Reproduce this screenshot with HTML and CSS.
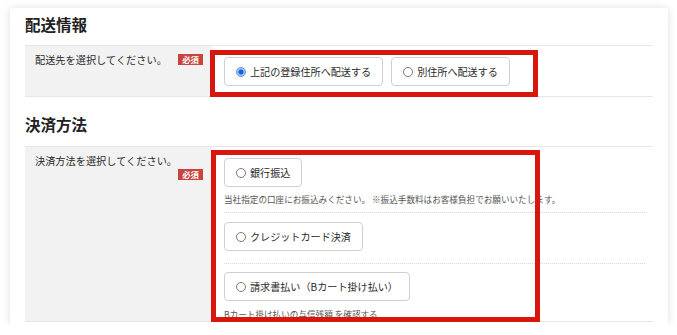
FILE: index.html
```html
<!DOCTYPE html>
<html lang="ja">
<head>
    <meta charset="UTF-8">
    <meta name="viewport" content="width=device-width, initial-scale=1.0">
    <title>配送情報・決済方法</title>
    <link rel="stylesheet" href="styles.css">
</head>
<body>
    <div class="card">
        <h2 class="section-title">配送情報</h2>
        <div class="form-row">
            <div class="form-label">
                <span class="label-text">配送先を選択してください。</span>
                <span class="required">必須</span>
            </div>
            <div class="form-field shipping">
                <div class="choice-list">
                    <label class="choice checked"><span class="radio"></span>上記の登録住所へ配送する</label>
                    <label class="choice"><span class="radio"></span>別住所へ配送する</label>
                </div>
                <div class="highlight highlight-shipping"></div>
            </div>
        </div>

        <h2 class="section-title second">決済方法</h2>
        <div class="form-row">
            <div class="form-label">
                <span class="label-text">決済方法を選択してください。</span>
                <span class="required">必須</span>
            </div>
            <div class="form-field payment">
                <div class="pay-item first">
                    <label class="choice"><span class="radio"></span>銀行振込</label>
                    <p class="note">当社指定の口座にお振込みください。 ※振込手数料はお客様負担でお願いいたします。</p>
                </div>
                <div class="pay-item">
                    <label class="choice"><span class="radio"></span>クレジットカード決済</label>
                </div>
                <div class="pay-item last">
                    <label class="choice"><span class="radio"></span>請求書払い（Bカート掛け払い）</label>
                    <p class="note">Bカート掛け払いの与信残額 を確認する</p>
                </div>
                <div class="highlight highlight-payment"></div>
            </div>
        </div>
    </div>
</body>
</html>
```

FILE: styles.css
```css
body {
    margin: 0;
    padding: 8px 9px 0 10px;
    background-color: #fff;
    font-family: "Noto Sans CJK JP", "Noto Sans", sans-serif;
    color: #2a2a2a;
}
.card {
    background-color: #fff;
    box-shadow: 0 0 8px rgba(0, 0, 0, 0.13);
    padding: 5px 15px 4px 15px;
    height: 317px;
    box-sizing: border-box;
    overflow: hidden;
}
.section-title {
    margin: 0 0 10px 0;
    font-size: 15.5px;
    line-height: 22px;
    font-weight: bold;
    color: #222;
}
.section-title.second {
    margin-top: 16px;
    margin-bottom: 11px;
}
.form-row {
    display: grid;
    grid-template-columns: 187px 1fr;
    border-top: 1px solid #e6e6e6;
    border-bottom: 1px solid #e6e6e6;
}
.form-label {
    background-color: #f2f2f2;
    padding: 7px 9px 0 10px;
    display: flex;
    flex-wrap: wrap;
    align-items: flex-start;
    align-content: flex-start;
    column-gap: 4px;
    font-size: 10.2px;
    line-height: 14px;
}
.required {
    margin-left: auto;
    margin-top: 1px;
    background-color: #c9443e;
    color: #fff;
    font-size: 8.4px;
    font-weight: bold;
    line-height: 11px;
    height: 11px;
    padding: 0 4px;
}
.form-field {
    position: relative;
    padding: 11px 8px 10px 12px;
}
.choice-list {
    display: flex;
    gap: 8px;
}
.choice {
    display: inline-flex;
    align-items: center;
    gap: 4px;
    height: 29px;
    box-sizing: border-box;
    padding: 0 11px 0 11px;
    border: 1px solid #cfcfcf;
    border-radius: 4px;
    background-color: #fff;
    font-size: 10.1px;
    color: #2a2a2a;
    white-space: nowrap;
}
.radio {
    width: 8px;
    height: 8px;
    border: 1px solid #7a7a7a;
    border-radius: 50%;
    background-color: #fff;
    flex-shrink: 0;
}
.choice.checked .radio {
    border-color: #4d8ff0;
    background: radial-gradient(circle, #1b5fd8 0 2.2px, #9cc2f7 2.8px, #cfe1fb 100%);
}
.payment {
    padding: 11px 8px 1px 12px;
}
.pay-item {
    padding-bottom: 12px;
    border-bottom: 1px dotted #d6d6d6;
    margin-bottom: 8px;
}
.pay-item.first {
    padding-bottom: 7px;
    margin-bottom: 9px;
}
.pay-item.last {
    border-bottom: none;
    padding-bottom: 0;
    margin-bottom: 0;
}
.note {
    margin: 6px 0 0 0;
    font-size: 8.6px;
    line-height: 12px;
    color: #555;
    white-space: nowrap;
}
.pay-item.last .note {
    margin-top: 7px;
}
.highlight {
    position: absolute;
    border: 5px solid #d8160d;
    box-sizing: border-box;
    pointer-events: none;
}
.highlight-shipping {
    left: -2px;
    top: 4px;
    width: 328px;
    height: 47px;
}
.highlight-payment {
    left: -1px;
    top: 3px;
    width: 329px;
    height: 172px;
}
```
